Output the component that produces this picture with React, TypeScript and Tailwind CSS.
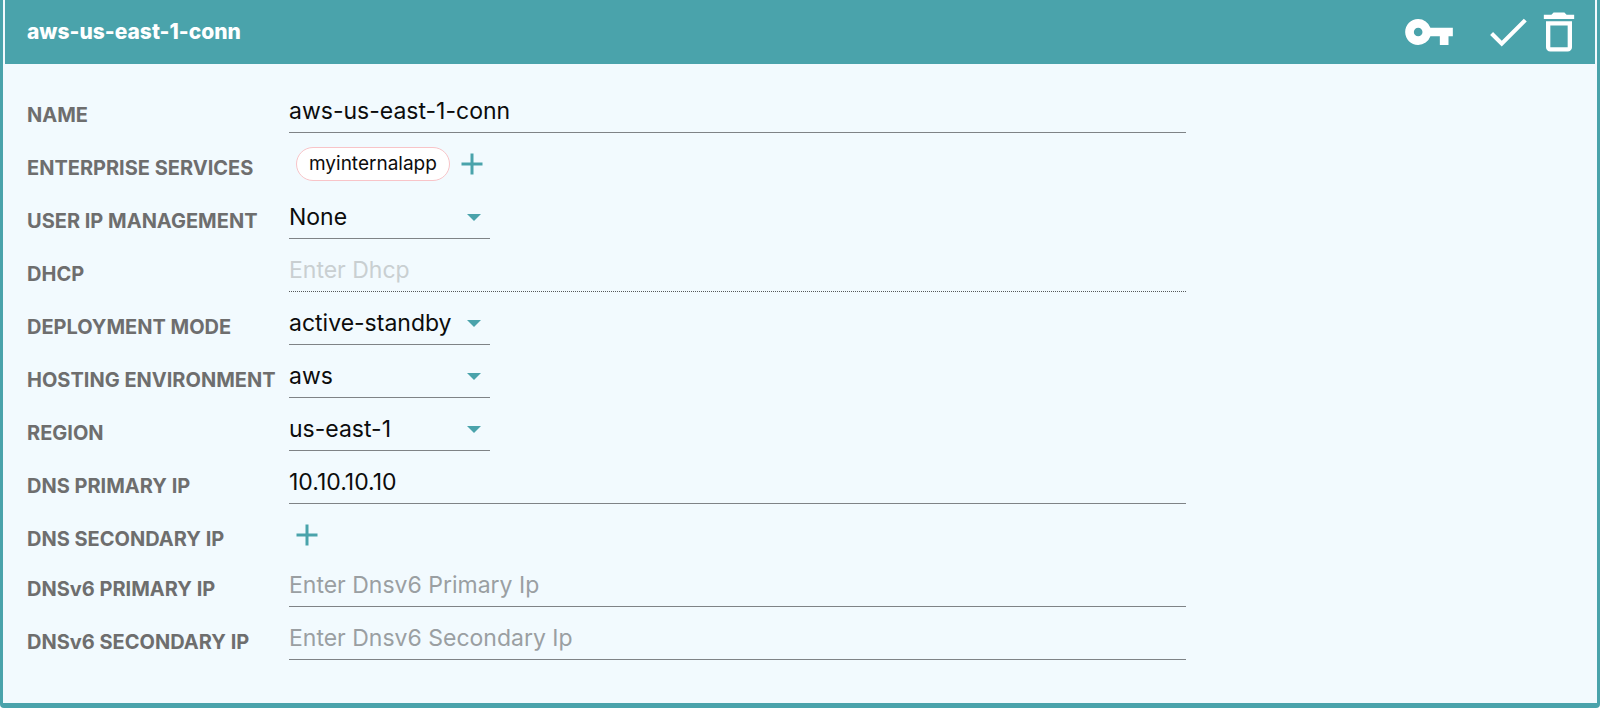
import { useState } from "react";
import type { ReactNode } from "react";
import { MdAdd, MdCheck, MdDeleteOutline, MdVpnKey } from "react-icons/md";

function Row({ label, htmlFor, short, children }: { label: string; htmlFor?: string; short?: boolean; children: ReactNode }) {
  const labelClass = "w-[262px] shrink-0 whitespace-nowrap pt-[23px] text-xl leading-6 font-bold text-[#6e6e6e]";
  return (
    <div className={short ? "flex h-[50px]" : "flex h-[53px]"}>
      {htmlFor ? (
        <label htmlFor={htmlFor} className={labelClass}>{label}</label>
      ) : (
        <span className={labelClass}>{label}</span>
      )}
      {children}
    </div>
  );
}

function TextField({ id, label, initial = "", placeholder, disabled }: { id: string; label: string; initial?: string; placeholder?: string; disabled?: boolean }) {
  const [value, setValue] = useState(initial);
  return (
    <Row label={label} htmlFor={id}>
      <input
        id={id}
        type="text"
        value={value}
        disabled={disabled}
        placeholder={placeholder}
        onChange={(e) => setValue(e.target.value)}
        className="w-[58%] rounded-none border-b border-[#7f8386] bg-transparent pt-3.5 pb-1 text-[23px] leading-7 text-[#0c0c0c] outline-none placeholder:text-[#9a9fa2] disabled:border-dotted disabled:border-[#55585a] disabled:placeholder:text-[#c9cfd1]"
      />
    </Row>
  );
}

function SelectField({ id, label, options }: { id: string; label: string; options: string[] }) {
  return (
    <Row label={label} htmlFor={id}>
      <div className="relative w-[201px]">
        <select
          id={id}
          className="h-full w-full appearance-none rounded-none border-b border-[#7f8386] bg-transparent pt-3 pb-0.5 text-[23px] leading-7 text-[#0c0c0c] outline-none"
        >
          {options.map((o) => (
            <option key={o}>{o}</option>
          ))}
        </select>
        <svg viewBox="0 0 14 7" className="pointer-events-none absolute top-7 right-[9px] h-[7px] w-[14px]" aria-hidden="true">
          <path d="M0 0h14L7 7z" fill="#4aa3ab" />
        </svg>
      </div>
    </Row>
  );
}

function AddButton({ label }: { label: string }) {
  return (
    <button type="button" aria-label={label} className="text-[#4aa3ab]">
      <MdAdd size={36} />
    </button>
  );
}

export default function App() {
  return (
    <main className="flex min-h-screen flex-col rounded-b-sm border-x-[3px] border-b-[5px] border-[#4aa3ab] bg-[#f2fafe] font-['Inter',sans-serif]">
      <header className="mx-[2px] flex h-16 items-center bg-[#4aa3ab] pr-[10px] pl-[22px] text-white">
        <h1 className="flex-1 text-[21px] font-extrabold">aws-us-east-1-conn</h1>
        <button type="button" aria-label="Show key" className="mr-7">
          <MdVpnKey size={52} />
        </button>
        <button type="button" aria-label="Save">
          <MdCheck size={50} />
        </button>
        <button type="button" aria-label="Delete">
          <MdDeleteOutline size={52} />
        </button>
      </header>
      <form className="px-6 pt-4 pb-8" onSubmit={(e) => e.preventDefault()}>
        <TextField id="name" label="NAME" initial="aws-us-east-1-conn" />
        <Row label="ENTERPRISE SERVICES">
          <div className="flex items-center gap-1 pt-2 pl-[7px]">
            <span className="flex h-[34px] items-center rounded-full border border-[#f8c4c8] bg-white px-3 text-[19px] leading-6 text-[#0c0c0c]">
              myinternalapp
            </span>
            <AddButton label="Add enterprise service" />
          </div>
        </Row>
        <SelectField id="user-ip" label="USER IP MANAGEMENT" options={["None"]} />
        <TextField id="dhcp" label="DHCP" placeholder="Enter Dhcp" disabled />
        <SelectField id="deployment" label="DEPLOYMENT MODE" options={["active-standby"]} />
        <SelectField id="hosting" label="HOSTING ENVIRONMENT" options={["aws"]} />
        <SelectField id="region" label="REGION" options={["us-east-1"]} />
        <TextField id="dns-primary" label="DNS PRIMARY IP" initial="10.10.10.10" />
        <Row label="DNS SECONDARY IP" short>
          <div className="flex items-center pt-3">
            <AddButton label="Add DNS secondary IP" />
          </div>
        </Row>
        <TextField id="dnsv6-primary" label="DNSv6 PRIMARY IP" placeholder="Enter Dnsv6 Primary Ip" />
        <TextField id="dnsv6-secondary" label="DNSv6 SECONDARY IP" placeholder="Enter Dnsv6 Secondary Ip" />
      </form>
    </main>
  );
}
